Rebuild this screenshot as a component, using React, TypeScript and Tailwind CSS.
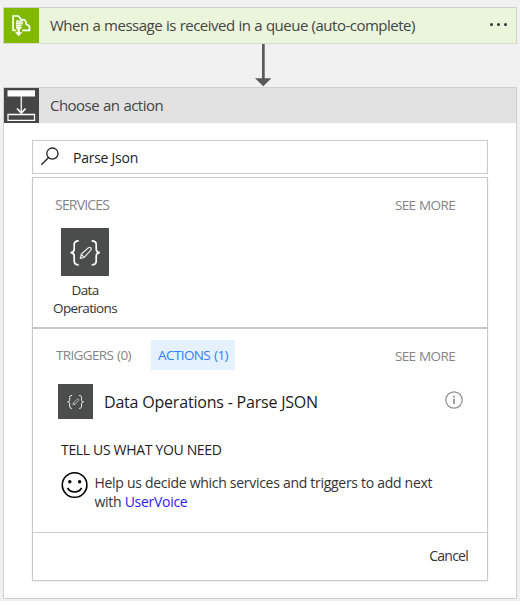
import type { ReactNode } from "react";

function QueueIcon() {
  return (
    <svg viewBox="0 0 35 35" className="block h-[35px] w-[35px] shrink-0 bg-[#7fba00]">
      <g fill="none" stroke="#fff" strokeWidth="1.7">
        <path d="M12.300 22.300H9.100V8h5.300l3.400 4.200" />
        <path d="M18.200 11.500c2.600 0 4.100 2 4.100 5 2 .2 3.200 1.300 3.200 3v2.800h-7.300" />
        <path d="M18.200 11v5.500" strokeWidth="1.200" />
      </g>
      <path d="M12 12.500h5.400v8.500H12z" fill="#fff" opacity=".6" />
      <path d="M12 12.500h5.400v1H12zM12 14.700h5.400v1H12zM12 16.900h5.400v1H12zM12 19h5.400v1H12z" fill="#fff" />
      <path d="M13.500 20h2.400v4.300h2.500L14.700 28.200 11 24.300h2.500z" fill="#fff" />
    </svg>
  );
}

function InsertIcon() {
  return (
    <svg viewBox="0 0 35 35" className="block h-[35px] w-[35px] shrink-0 bg-[#464646]">
      <path d="M3.500 2.300h27.500v6.200H3.500z" fill="#fff" />
      <path d="M17.300 8v17" stroke="#e4e4e4" strokeWidth="1.500" />
      <path d="M13 20.500l4.300 4.600 4.300-4.600" fill="none" stroke="#fff" strokeWidth="1.700" />
      <path d="M4 26.500h26.500v5.800H4z" fill="none" stroke="#fff" strokeWidth="1.300" />
    </svg>
  );
}

function BracesIcon({ viewBox }: { viewBox: string }) {
  return (
    <svg viewBox={viewBox} className="block h-full w-full bg-[#4b4d4c]">
      <g fill="none" stroke="#fff" strokeWidth="1.700">
        <path d="M17.700 12.800c-3.300 0-4.500.9-4.500 3.700v4.300c0 2.400-.9 3.900-3.700 3.900 2.800 0 3.700 1.500 3.700 3.900v4.300c0 2.800 1.200 3.900 4.500 3.900" />
        <path d="M30.700 12.800c3.300 0 4.500.9 4.500 3.700v4.300c0 2.400.9 3.900 3.700 3.900-2.800 0-3.700 1.500-3.700 3.900v4.300c0 2.800-1.200 3.900-4.500 3.900" />
      </g>
      <path d="M19.300 30.300l.9-4 7.200-6.600c1.500-1.200 3.700.7 2.500 2.400l-6.700 7.200zM20.200 26.300l3 3" fill="none" stroke="#e5e5e5" strokeWidth="1.200" strokeLinejoin="round" />
    </svg>
  );
}

function SearchIcon() {
  return (
    <svg viewBox="0 0 20 20" className="block h-5 w-5 shrink-0" fill="none" stroke="#222" strokeWidth="1.300">
      <circle cx="12.400" cy="7.600" r="5.600" />
      <path d="M8.400 11.700L1.300 18.700" />
    </svg>
  );
}

function SmileIcon() {
  return (
    <svg viewBox="0 0 28 28" className="block h-7 w-7 shrink-0">
      <circle cx="13.600" cy="14" r="12.300" fill="none" stroke="#000" strokeWidth="1.600" />
      <circle cx="8.800" cy="10.700" r="1.700" />
      <circle cx="18.600" cy="10.700" r="1.700" />
      <path d="M6.600 17c2.900 5.300 11.100 5.300 14 0" fill="none" stroke="#000" strokeWidth="1.600" />
    </svg>
  );
}

function InfoIcon() {
  return (
    <svg viewBox="0 0 18 18" className="block h-[18px] w-[18px] shrink-0">
      <circle cx="9" cy="9" r="8.200" fill="none" stroke="#909090" strokeWidth="1.200" />
      <path d="M8.200 4.800h1.600v1.600H8.200zM8.200 7.700h1.600v5.200H8.200z" fill="#888" />
    </svg>
  );
}

function SeeMore({ children }: { children: ReactNode }) {
  return (
    <button className="h-5 text-[13.5px] leading-5 tracking-[-0.65px] text-[#858585] [word-spacing:0.8px]">
      {children}
    </button>
  );
}

export default function App() {
  return (
    <div className="h-[605px] w-[520px] overflow-hidden bg-white font-['Open_Sans','Noto_Sans',sans-serif] whitespace-nowrap">
      <main className="h-[601px] bg-[#f1f1f1] pt-[7px] pr-[3px] pl-[3px]">
        <header className="flex h-[37px] items-start border border-[#d0d0d0] border-b-[#d9dccf] bg-[#ebf5dc]">
          <QueueIcon />
          <h1 className="ml-[11px] text-[15px] leading-[35px] tracking-[-0.5px] text-[#444] [word-spacing:0.4px]">
            When a message is received in a queue (auto-complete)
          </h1>
          <div className="mt-[15px] mr-[9px] ml-auto flex gap-1">
            <i className="h-[3px] w-[3px] rounded-full bg-[#333]" />
            <i className="h-[3px] w-[3px] rounded-full bg-[#333]" />
            <i className="h-[3px] w-[3px] rounded-full bg-[#333]" />
          </div>
        </header>

        <div className="h-[43px] pl-[251px]">
          <svg viewBox="0 0 18 43" className="block h-[43px] w-[18px]" fill="#595959">
            <path d="M8 0h2.700v34.200H17.300L9.300 42.200 1 34.200H8z" />
          </svg>
        </div>

        <section className="h-[512px] border border-[#d0d0d0] bg-white">
          <div className="flex h-[35px] bg-[#e2e2e2]">
            <InsertIcon />
            <h2 className="ml-[11px] text-[15px] leading-[35px] tracking-[-0.52px] text-[#444] [word-spacing:0.5px]">
              Choose an action
            </h2>
          </div>

          <div className="ml-7 w-[456px] pt-[17px]">
            <label className="flex h-[34px] border border-[#cbcbcb] pt-[5px] pl-[7px]">
              <SearchIcon />
              <span className="ml-[13px] text-[14px] leading-[23px] tracking-[-0.25px] text-[#222]">Parse Json</span>
            </label>

            <div className="mt-[3px] h-[404px] border border-[#c9c9c9] shadow-[0_1px_2px_#00000010]">
              <div className="h-[151px] border-b-2 border-[#c9c6c8] pt-[17px] pl-[22px]">
                <div className="flex justify-between pr-8">
                  <h3 className="text-[14px] leading-5 tracking-[-0.8px] text-[#858585]">SERVICES</h3>
                  <SeeMore>SEE MORE</SeeMore>
                </div>
                <div className="mt-[13px] ml-[-4px] flex w-[68px] flex-col items-center">
                  <div className="h-12 w-12">
                    <BracesIcon viewBox="0 0 48 48" />
                  </div>
                  <p className="mt-[5px] text-center text-[13.5px] leading-[18px] tracking-[-0.65px] text-[#333]">
                    Data
                    <br />
                    Operations
                  </p>
                </div>
              </div>

              <div className="h-[204px] border-b border-[#c9c9c9] pt-[11px] pl-[23px]">
                <div className="flex h-[30px] items-center pr-8">
                  <button className="w-[75px] text-left text-[13.5px] leading-[31px] tracking-[-0.65px] text-[#858585] [word-spacing:1px]">
                    TRIGGERS (0)
                  </button>
                  <button className="ml-[20px] h-[30px] w-[84px] bg-[#e5f1ff] text-[13.5px] leading-[31px] tracking-[-0.6px] text-[#2f80ff] [word-spacing:1px]">
                    ACTIONS (1)
                  </button>
                  <div className="ml-auto">
                    <SeeMore>SEE MORE</SeeMore>
                  </div>
                </div>

                <div className="mt-[14px] ml-[2px] flex h-[35px] pr-6">
                  <div className="h-[35px] w-[35px]">
                    <BracesIcon viewBox="-8.500 -8.500 65 65" />
                  </div>
                  <p className="ml-[11px] text-[16px] leading-[36px] tracking-[-0.2px] text-[#1c1c1c]">
                    Data Operations - Parse JSON
                  </p>
                  <div className="mt-[7px] ml-auto">
                    <InfoIcon />
                  </div>
                </div>

                <h3 className="mt-[21px] ml-[5px] text-[14px] leading-5 tracking-[-0.33px] text-[#222]">
                  TELL US WHAT YOU NEED
                </h3>
                <div className="mt-[11px] ml-[5px] flex">
                  <SmileIcon />
                  <p className="mt-0.5 ml-[5.500px] text-[14px] leading-[19px] tracking-[-0.29px] text-[#333]">
                    Help us decide which services and triggers to add next
                    <br />
                    with <a className="text-[#2a1cf5]">UserVoice</a>
                  </p>
                </div>
              </div>

              <div className="flex justify-end pt-3 pr-[19px]">
                <button className="text-[14px] leading-[21px] tracking-[-0.75px] text-[#333]">Cancel</button>
              </div>
            </div>
          </div>
        </section>
      </main>
    </div>
  );
}
